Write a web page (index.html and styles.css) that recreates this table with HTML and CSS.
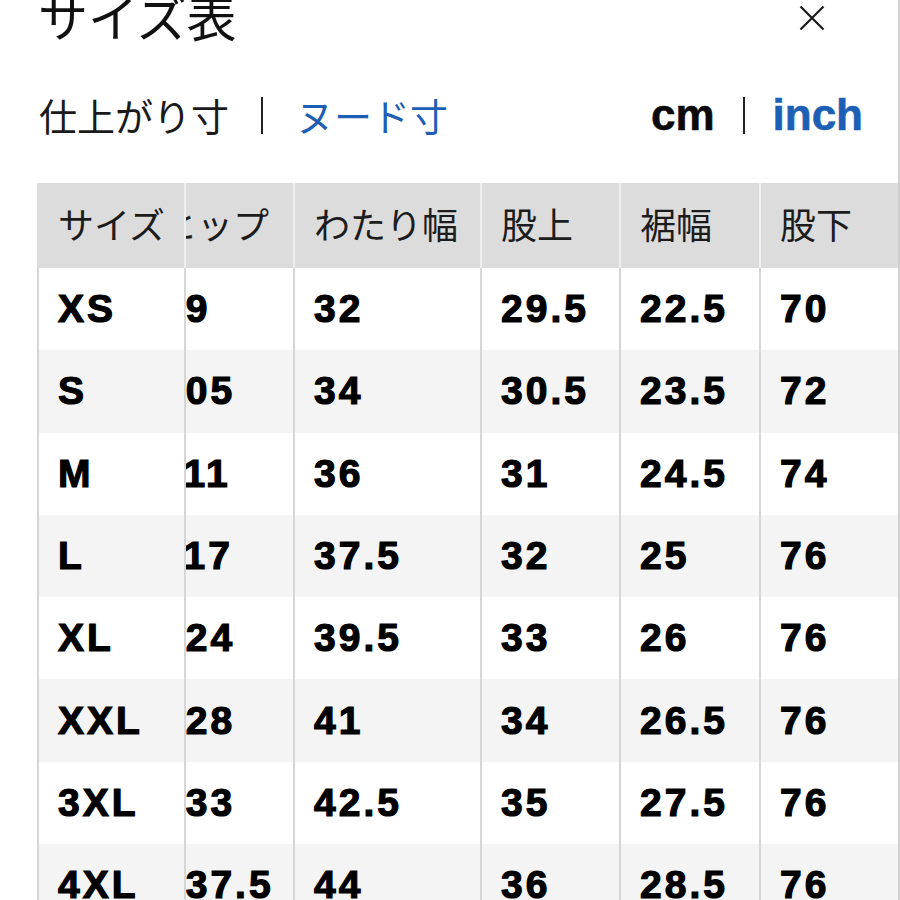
FILE: index.html
```html
<!DOCTYPE html>
<html lang="ja">
<head>
<meta charset="utf-8">
<title>サイズ表</title>
<link rel="stylesheet" href="styles.css">
</head>
<body>
<div class="page">
  <div class="title-row">
    <h1 class="title">サイズ表</h1>
    <button class="close" aria-label="閉じる">
      <svg width="26" height="26" viewBox="0 0 26 26"><path d="M1.5 1.5 L24.5 24.5 M24.5 1.5 L1.5 24.5" stroke="#1a1a1a" stroke-width="2.2" fill="none"/></svg>
    </button>
  </div>
  <div class="switch-row">
    <div class="switch jp">
      <span class="opt">仕上がり寸</span>
      <span class="sep"></span>
      <span class="opt active">ヌード寸</span>
    </div>
    <div class="switch unit">
      <span class="opt">cm</span>
      <span class="sep"></span>
      <span class="opt active">inch</span>
    </div>
  </div>
  <div class="table-wrap">
    <div class="row head">
      <div class="cell sticky">サイズ</div>
      <div class="scroll">
        <div class="cell c1">ヒップ</div>
        <div class="cell c2">わたり幅</div>
        <div class="cell c3">股上</div>
        <div class="cell c4">裾幅</div>
        <div class="cell c5">股下</div>
      </div>
    </div>
    <div class="row">
      <div class="cell sticky">XS</div>
      <div class="scroll"><div class="cell c1">99</div><div class="cell c2">32</div><div class="cell c3">29.5</div><div class="cell c4">22.5</div><div class="cell c5">70</div></div>
    </div>
    <div class="row alt">
      <div class="cell sticky">S</div>
      <div class="scroll"><div class="cell c1">105</div><div class="cell c2">34</div><div class="cell c3">30.5</div><div class="cell c4">23.5</div><div class="cell c5">72</div></div>
    </div>
    <div class="row">
      <div class="cell sticky">M</div>
      <div class="scroll"><div class="cell c1">111</div><div class="cell c2">36</div><div class="cell c3">31</div><div class="cell c4">24.5</div><div class="cell c5">74</div></div>
    </div>
    <div class="row alt">
      <div class="cell sticky">L</div>
      <div class="scroll"><div class="cell c1">117</div><div class="cell c2">37.5</div><div class="cell c3">32</div><div class="cell c4">25</div><div class="cell c5">76</div></div>
    </div>
    <div class="row">
      <div class="cell sticky">XL</div>
      <div class="scroll"><div class="cell c1">124</div><div class="cell c2">39.5</div><div class="cell c3">33</div><div class="cell c4">26</div><div class="cell c5">76</div></div>
    </div>
    <div class="row alt">
      <div class="cell sticky">XXL</div>
      <div class="scroll"><div class="cell c1">128</div><div class="cell c2">41</div><div class="cell c3">34</div><div class="cell c4">26.5</div><div class="cell c5">76</div></div>
    </div>
    <div class="row">
      <div class="cell sticky">3XL</div>
      <div class="scroll"><div class="cell c1">133</div><div class="cell c2">42.5</div><div class="cell c3">35</div><div class="cell c4">27.5</div><div class="cell c5">76</div></div>
    </div>
    <div class="row alt">
      <div class="cell sticky">4XL</div>
      <div class="scroll"><div class="cell c1">137.5</div><div class="cell c2">44</div><div class="cell c3">36</div><div class="cell c4">28.5</div><div class="cell c5">76</div></div>
    </div>
  </div>
</div>
</body>
</html>
```
FILE: styles.css
```css
html, body {
  margin: 0;
  padding: 0;
  background: #ffffff;
}
body {
  overflow: hidden;
}
.page {
  width: 898px;
  height: 900px;
  border-right: 2px solid #cfcfcf;
  overflow: hidden;
  font-family: "Noto Sans CJK JP", "Noto Sans", sans-serif;
  color: #151515;
}
.title-row {
  display: flex;
  justify-content: space-between;
  align-items: flex-start;
  margin-top: -10px;
  padding: 0 73px 0 38px;
  height: 50px;
}
.title {
  margin: 0;
  font-size: 50px;
  line-height: 50px;
  font-weight: 400;
  color: #111;
}
.close {
  border: 0;
  background: none;
  padding: 0;
  margin-top: 15px;
  width: 26px;
  height: 26px;
  display: block;
}
.close svg { display: block; }
.switch-row {
  display: flex;
  justify-content: space-between;
  align-items: center;
  margin-top: 55px;
  padding: 0 35px 0 39px;
  height: 40px;
}
.switch {
  display: flex;
  align-items: center;
}
.switch .sep {
  display: block;
  width: 2px;
  height: 37px;
  background: #222;
}
.jp .opt {
  font-size: 38px;
  line-height: 40px;
  color: #1a1a1a;
}
.jp .sep { margin: 0 33px 0 32px; }
.unit .opt {
  font-family: "Liberation Sans", Arial, sans-serif;
  font-weight: 700;
  font-size: 44px;
  line-height: 40px;
  color: #0a0a0a;
  -webkit-text-stroke: 0.6px currentColor;
}
.unit .sep { margin: 0 28px 0 28px; }
.switch .opt.active { color: #1d5fb4; }

.table-wrap {
  margin-top: 48px;
  margin-left: 37px;
  overflow: hidden;
}
.row {
  display: flex;
  height: 82.3px;
  background: #ffffff;
}
.row.alt { background: #f4f4f4; }
.row.head {
  height: 85px;
  background: #dcdcdc;
}
.cell {
  flex: none;
  box-sizing: border-box;
  height: 100%;
  display: flex;
  align-items: center;
  padding-left: 19px;
  border-left: 2px solid #d6d6d6;
  white-space: nowrap;
  font-family: "Liberation Sans", Arial, sans-serif;
  font-weight: 700;
  font-size: 39px;
  letter-spacing: 3px;
  -webkit-text-stroke: 1.2px #000;
  color: #000;
}
.head .cell {
  font-family: "Noto Sans CJK JP", "Noto Sans", sans-serif;
  font-weight: 400;
  font-size: 36px;
  letter-spacing: 0;
  -webkit-text-stroke: 0;
  color: #1c1c1c;
  border-left-color: #eeeeee;
  padding-bottom: 6px;
}
.sticky {
  position: relative;
  z-index: 2;
  width: 149px;
  background: inherit;
  border-right: 2px solid #d6d6d6;
}
.head .sticky {
  border-left-color: #dcdcdc;
  border-right-color: #eeeeee;
}
.scroll {
  display: flex;
  height: 100%;
  margin-left: -46px;
}
.c1 { width: 153px; }
.c2 { width: 187px; }
.c3 { width: 139px; }
.c4 { width: 140px; }
.c5 { width: 160px; }
```
